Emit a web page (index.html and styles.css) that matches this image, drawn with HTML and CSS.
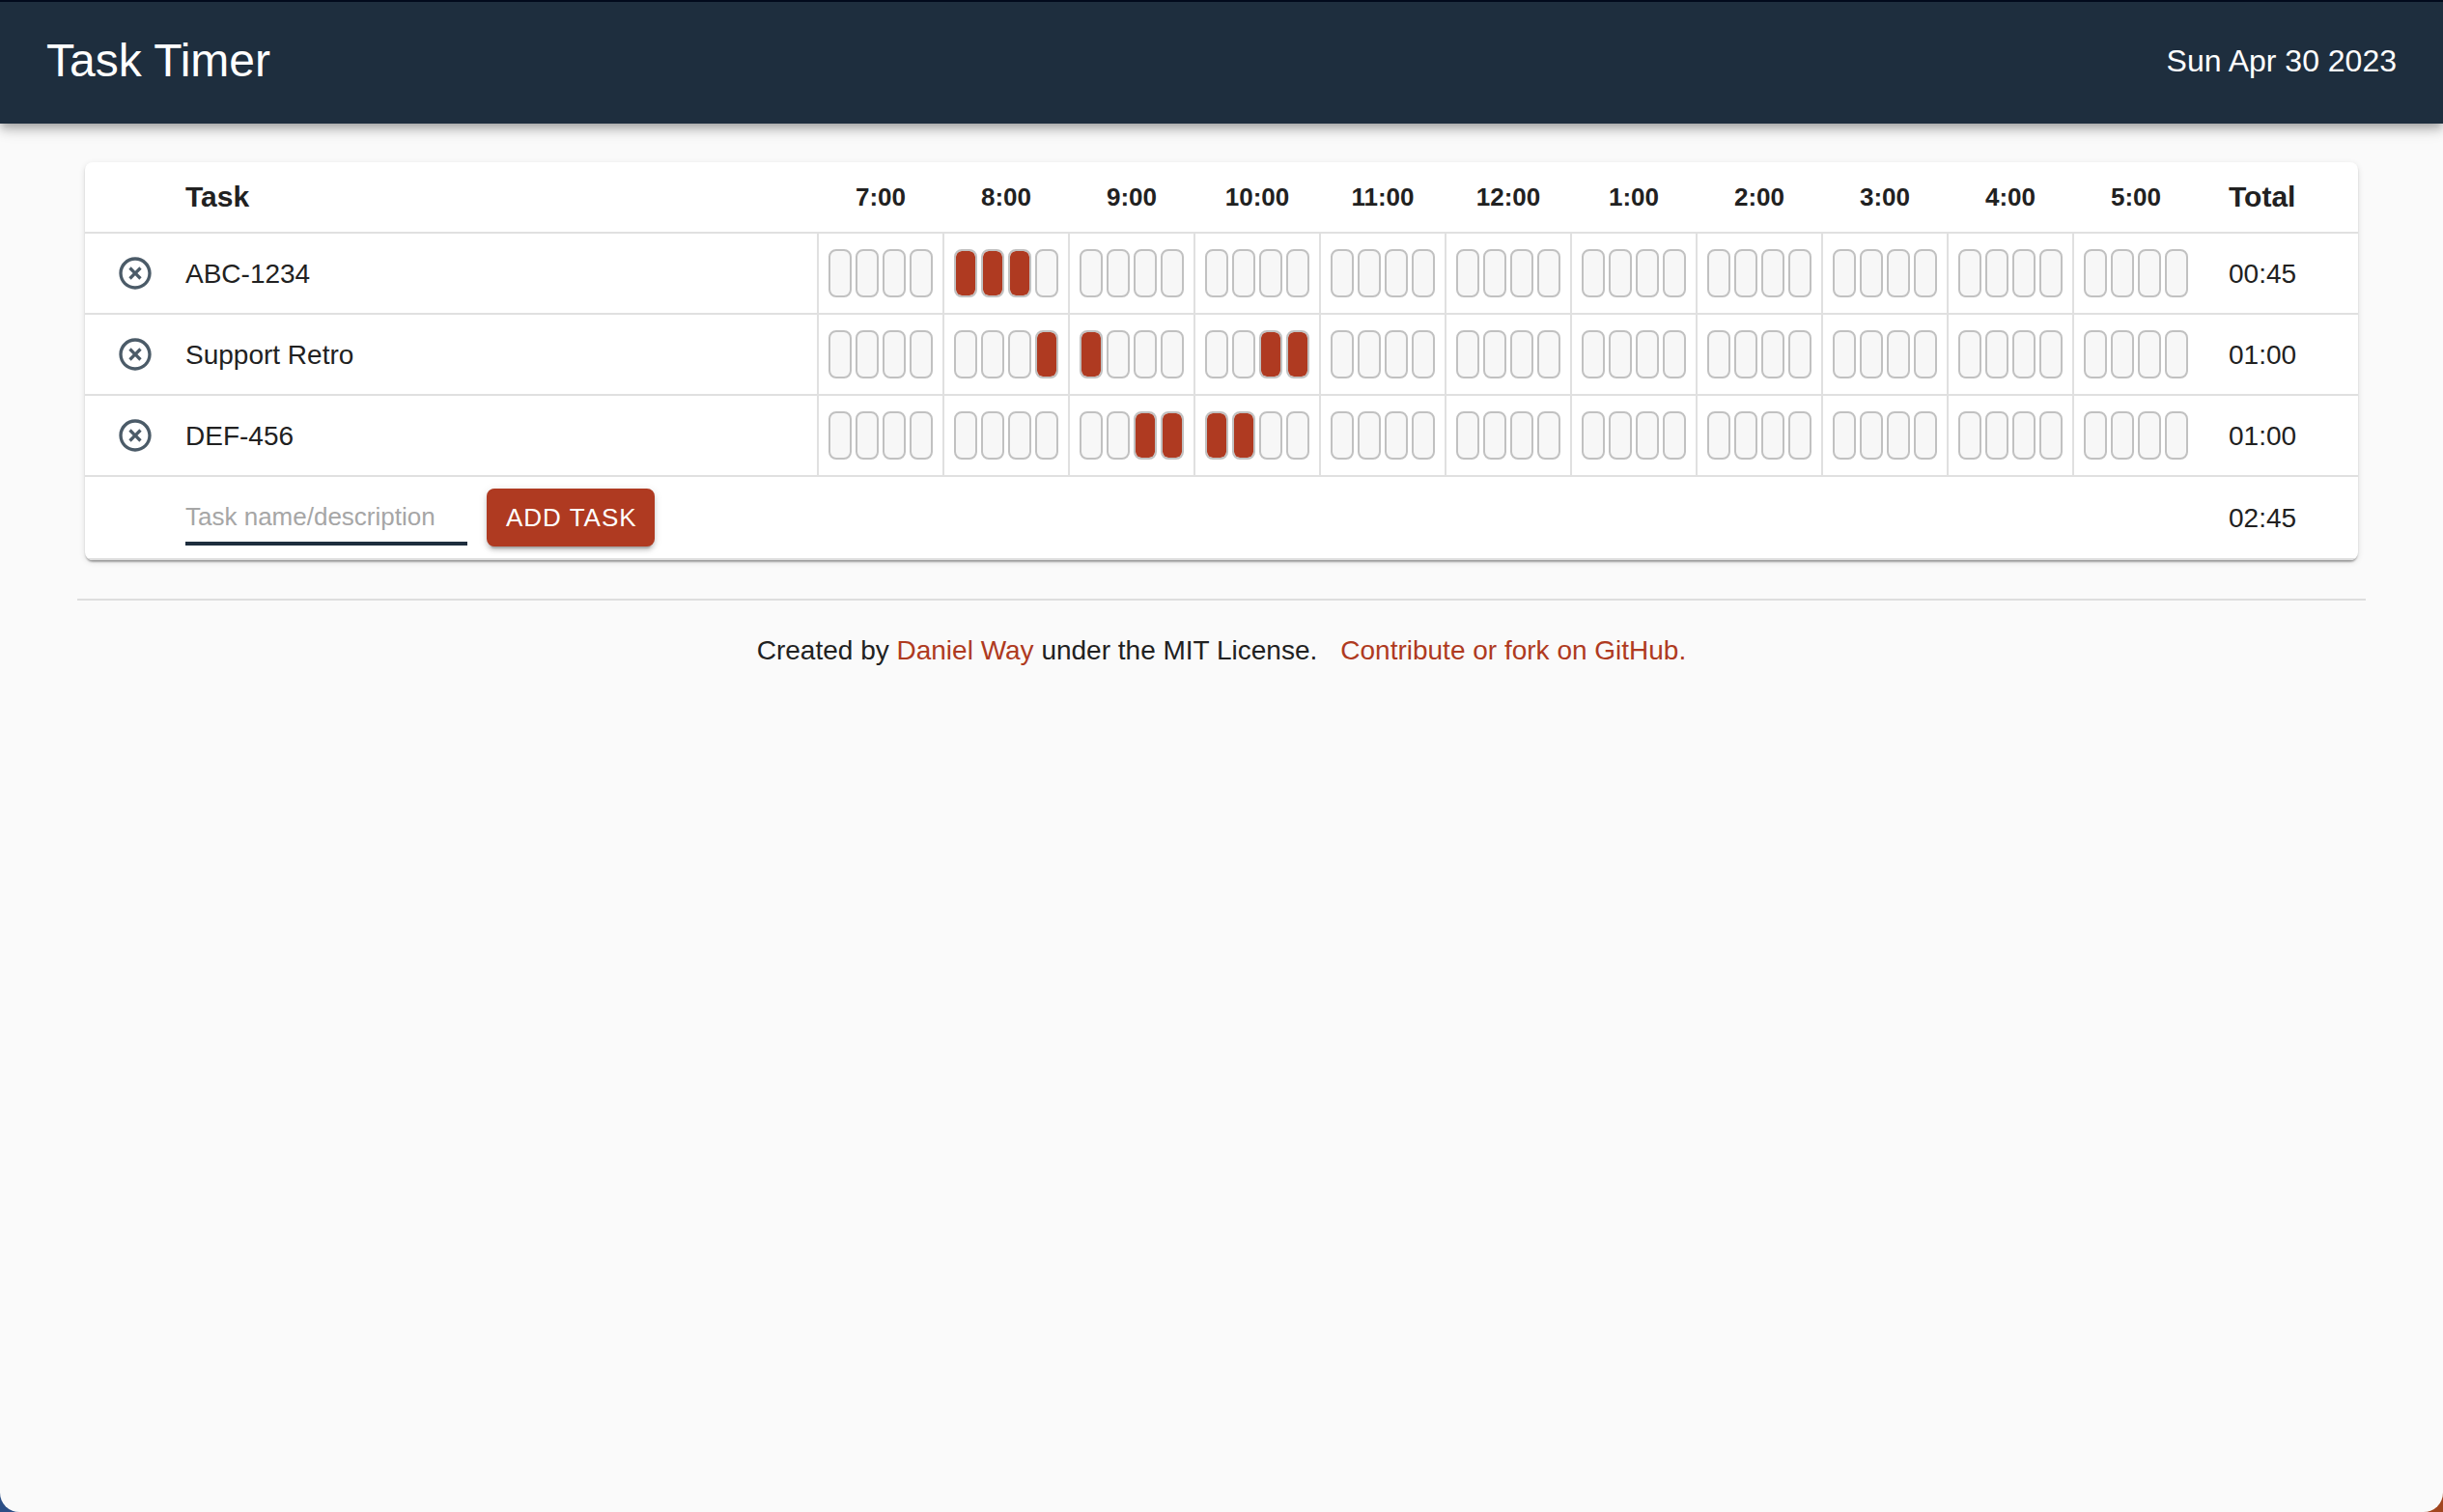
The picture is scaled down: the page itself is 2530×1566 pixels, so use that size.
FILE: index.html
```html
<!DOCTYPE html>
<html lang="en">
<head>
  <meta charset="utf-8">
  <meta name="viewport" content="width=device-width, initial-scale=1">
  <title>Task Timer</title>
  <link rel="stylesheet" href="styles.css">
</head>
<body>
  <div class="page">
    <header class="app-bar">
      <h1 class="app-title">Task Timer</h1>
      <time class="app-date" datetime="2023-04-30">Sun Apr 30 2023</time>
    </header>

    <main class="content">
      <div class="paper">
        <table class="timesheet">
          <colgroup id="columns">
            <col class="col-remove">
            <col class="col-task">
          </colgroup>
          <thead>
            <tr id="head-row">
              <td></td>
              <th class="head-main" scope="col">Task</th>
            </tr>
          </thead>
          <tbody id="task-rows"></tbody>
          <tfoot>
            <tr>
              <td></td>
              <td class="add-cell" colspan="12">
                <form class="add-form" id="add-form">
                  <input class="add-input" id="task-name" type="text" placeholder="Task name/description" aria-label="Task name/description" autocomplete="off">
                  <button class="add-button" type="submit">ADD TASK</button>
                </form>
              </td>
              <td class="total-cell" id="grand-total"></td>
            </tr>
          </tfoot>
        </table>
      </div>

      <hr class="divider">

      <footer class="credits">
        <span>Created by <a class="link" href="#author">Daniel Way</a> under the MIT License.</span>
        <a class="link" href="#source">Contribute or fork on GitHub.</a>
      </footer>
    </main>
  </div>
  <script src="app.js"></script>
</body>
</html>
```

FILE: styles.css
```css
:root {
  --navy: #1e2e3e;
  --rust: #af3a21;
  --text: #212121;
  --line: #e0e0e0;
  --surface: #fafafa;
}

* {
  box-sizing: border-box;
}

html {
  background: linear-gradient(to right, #2c4f86 50%, #a1461f 50%);
}

body {
  margin: 0;
  color: var(--text);
  font-family: "Liberation Sans", Arial, sans-serif;
  font-size: 28px;
  line-height: 36px;
}

.page {
  min-height: 100vh;
  background: var(--surface);
  border-radius: 0 0 20px 20px;
}

.app-bar {
  display: flex;
  align-items: center;
  justify-content: space-between;
  height: 128px;
  padding: 0 48px 4px;
  border-top: 2px solid #020a1c;
  background: var(--navy);
  color: #fff;
  box-shadow:
    0 4px 8px -2px rgba(0, 0, 0, 0.2),
    0 8px 10px rgba(0, 0, 0, 0.14),
    0 2px 20px rgba(0, 0, 0, 0.12);
}

.app-title {
  margin: 0;
  font-size: 48px;
  font-weight: 400;
  line-height: 64px;
}

.app-date {
  font-size: 32px;
}

.content {
  padding: 40px 80px;
}

.paper {
  margin: 0 8px;
  overflow: hidden;
  border-radius: 8px;
  background: #fff;
  box-shadow:
    0 4px 2px -2px rgba(0, 0, 0, 0.2),
    0 2px 2px rgba(0, 0, 0, 0.14),
    0 2px 6px rgba(0, 0, 0, 0.12);
}

.timesheet {
  width: 100%;
  table-layout: fixed;
  border-collapse: separate;
  border-spacing: 0;
}

.col-remove {
  width: 72px;
}

.col-hour {
  width: 130px;
}

.col-total {
  width: 166px;
}

.timesheet th,
.timesheet td {
  padding: 0;
  border-bottom: 2px solid var(--line);
  text-align: left;
  vertical-align: middle;
}

.timesheet .head-main {
  padding: 18px 0 18px 32px;
  font-size: 30px;
}

.timesheet .head-hour {
  padding-left: 2px;
  font-size: 26px;
  text-align: center;
}

.timesheet .remove-cell {
  padding-left: 32px;
}

.timesheet .task-cell,
.timesheet .total-cell {
  padding: 2px 0 0 32px;
}

.timesheet .add-cell {
  padding-left: 32px;
}

.timesheet .hour-cell {
  padding: 16px 10px;
  border-left: 2px solid var(--line);
}

.remove-button {
  display: block;
  width: 40px;
  height: 40px;
  padding: 0;
  border: 0;
  background: none;
  color: #4b5b68;
  cursor: pointer;
}

.remove-icon {
  display: block;
  width: 40px;
  height: 40px;
  fill: currentColor;
}

.slots {
  display: flex;
  gap: 4px;
}

.slot {
  width: 24px;
  height: 50px;
  padding: 0;
  border: 2px solid #c1c1c1;
  border-radius: 8px;
  background: #f7f7f7;
  cursor: pointer;
}

.slot[aria-pressed="true"] {
  background: var(--rust);
  background-clip: padding-box;
}

.add-form {
  display: flex;
  align-items: center;
  gap: 20px;
  padding: 12px 0;
}

.add-input {
  width: 292px;
  height: 58px;
  padding: 2px 0 0;
  border: 0;
  border-bottom: 4px solid var(--navy);
  outline: 0;
  background: none;
  color: var(--text);
  font-family: inherit;
  font-size: 26px;
}

.add-input::placeholder {
  color: #a6a6a6;
}

.add-button {
  height: 60px;
  padding: 0 18px 0 20px;
  border: 0;
  border-radius: 8px;
  background: var(--rust);
  color: #fff;
  font-family: inherit;
  font-size: 26px;
  letter-spacing: 1px;
  cursor: pointer;
  box-shadow:
    0 6px 2px -4px rgba(0, 0, 0, 0.2),
    0 4px 4px rgba(0, 0, 0, 0.14),
    0 2px 10px rgba(0, 0, 0, 0.12);
}

.divider {
  height: 2px;
  margin: 40px 0 34px;
  border: 0;
  background: #dedede;
}

.credits {
  display: flex;
  justify-content: center;
  gap: 24px;
}

.link {
  color: var(--rust);
  text-decoration: none;
}
```

FILE: app.js
```js
const HOURS = ["7:00", "8:00", "9:00", "10:00", "11:00", "12:00", "1:00", "2:00", "3:00", "4:00", "5:00"];
const SLOTS_PER_HOUR = 4;

// Each task keeps the indexes of its filled quarter hours, counted from 7:00.
const tasks = [
  { name: "ABC-1234", filled: new Set([4, 5, 6]) },
  { name: "Support Retro", filled: new Set([7, 8, 14, 15]) },
  { name: "DEF-456", filled: new Set([10, 11, 12, 13]) },
];

const ICON_PATH = "M14.59 8L12 10.59 9.41 8 8 9.41 10.59 12 8 14.59 9.41 16 12 13.41 14.59 16 16 14.59 13.41 12 16 9.41 14.59 8zM12 2C6.47 2 2 6.47 2 12s4.47 10 10 10 10-4.47 10-10S17.53 2 12 2zm0 18c-4.41 0-8-3.59-8-8s3.59-8 8-8 8 3.59 8 8-3.59 8-8 8z";

function element(tag, className, text) {
  const node = document.createElement(tag);
  if (className) node.className = className;
  if (text) node.textContent = text;
  return node;
}

function formatTime(count) {
  const minutes = count * 15;
  const pad = (value) => String(value).padStart(2, "0");
  return pad(Math.floor(minutes / 60)) + ":" + pad(minutes % 60);
}

function renderHead() {
  const columns = document.getElementById("columns");
  const row = document.getElementById("head-row");
  for (const hour of HOURS) {
    columns.append(element("col", "col-hour"));
    const cell = element("th", "head-hour", hour);
    cell.scope = "col";
    row.append(cell);
  }
  columns.append(element("col", "col-total"));
  const total = element("th", "head-main", "Total");
  total.scope = "col";
  row.append(total);
}

function renderTask(task) {
  const row = element("tr");

  const removeCell = element("td", "remove-cell");
  const remove = element("button", "remove-button");
  remove.type = "button";
  remove.setAttribute("aria-label", "Remove " + task.name);
  remove.innerHTML = `<svg class="remove-icon" viewBox="0 0 24 24" aria-hidden="true"><path d="${ICON_PATH}"/></svg>`;
  remove.addEventListener("click", () => {
    tasks.splice(tasks.indexOf(task), 1);
    render();
  });
  removeCell.append(remove);
  row.append(removeCell, element("td", "task-cell", task.name));

  HOURS.forEach((hour, hourIndex) => {
    const cell = element("td", "hour-cell");
    const slots = element("div", "slots");
    for (let quarter = 0; quarter < SLOTS_PER_HOUR; quarter++) {
      const index = hourIndex * SLOTS_PER_HOUR + quarter;
      const slot = element("button", "slot");
      slot.type = "button";
      slot.setAttribute("aria-label", `${task.name}, ${hour}, quarter ${quarter + 1}`);
      slot.setAttribute("aria-pressed", String(task.filled.has(index)));
      slot.addEventListener("click", () => {
        if (!task.filled.delete(index)) task.filled.add(index);
        render();
      });
      slots.append(slot);
    }
    cell.append(slots);
    row.append(cell);
  });

  row.append(element("td", "total-cell", formatTime(task.filled.size)));
  return row;
}

function render() {
  document.getElementById("task-rows").replaceChildren(...tasks.map(renderTask));
  const total = tasks.reduce((sum, task) => sum + task.filled.size, 0);
  document.getElementById("grand-total").textContent = formatTime(total);
}

document.getElementById("add-form").addEventListener("submit", (event) => {
  event.preventDefault();
  const input = document.getElementById("task-name");
  const name = input.value.trim();
  if (!name) return;
  tasks.push({ name, filled: new Set() });
  input.value = "";
  render();
});

renderHead();
render();
```
